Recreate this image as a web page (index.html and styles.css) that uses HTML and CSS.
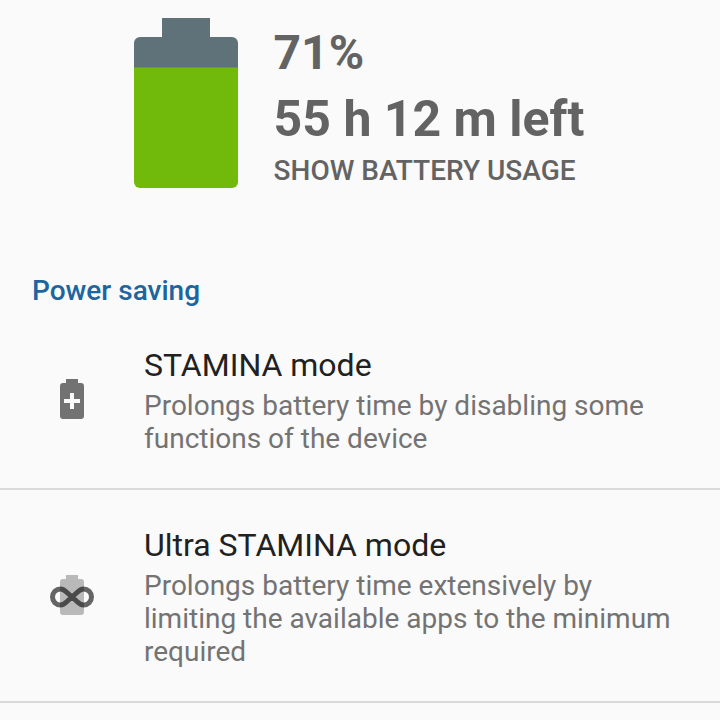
FILE: index.html
```html
<!DOCTYPE html>
<html lang="en">
<head>
  <meta charset="UTF-8" />
  <meta name="viewport" content="width=device-width, initial-scale=1.0"/>
  <title>Battery</title>
  <link rel="stylesheet" href="styles.css">
</head>
<body>

<header class="summary">
  <svg class="battery" viewBox="0 0 104 170" aria-hidden="true">
    <path fill="#607279" d="M28 0h48v19h22a6 6 0 0 1 6 6v26H0V25a6 6 0 0 1 6-6h22z"/>
    <path fill="#71b90b" d="M0 49.500h104v114.500a6 6 0 0 1-6 6H6a6 6 0 0 1-6-6z"/>
  </svg>
  <div class="summary-text">
    <p class="percent">71%</p>
    <p class="remaining">55 h 12 m left</p>
    <a class="usage-link" href="#usage">SHOW BATTERY USAGE</a>
  </div>
</header>

<main>
  <h2 class="section-title">Power saving</h2>

  <a class="mode" href="#stamina">
    <svg class="mode-icon" viewBox="0 0 48 48" aria-hidden="true">
      <path fill="#727272" d="M18 4h12v4h3a3 3 0 0 1 3 3v30a3 3 0 0 1-3 3H15a3 3 0 0 1-3-3V11a3 3 0 0 1 3-3h3z"/>
      <path fill="#fafafa" d="M22 18h4v6h6v4h-6v6h-4v-6h-6v-4h6z"/>
    </svg>
    <div class="mode-text">
      <h3>STAMINA mode</h3>
      <p>Prolongs battery time by disabling some functions of the device</p>
    </div>
  </a>

  <a class="mode" href="#ultra-stamina">
    <svg class="mode-icon" viewBox="0 0 48 48" aria-hidden="true">
      <path fill="#b9b9b9" d="M18 4h12v4h3a3 3 0 0 1 3 3v30a3 3 0 0 1-3 3H15a3 3 0 0 1-3-3V11a3 3 0 0 1 3-3h3z"/>
      <path fill="none" stroke="#000" stroke-opacity="0.6" stroke-width="5" d="M24 26L19 21.500C17 19.500 15 18 12.500 18a8 8 0 0 0 0 16C15 34 17 32.500 19 30.500L29 21.500C31 19.500 33 18 35.500 18a8 8 0 0 1 0 16C33 34 31 32.500 29 30.500z"/>
    </svg>
    <div class="mode-text">
      <h3>Ultra STAMINA mode</h3>
      <p>Prolongs battery time extensively by limiting the available apps to the minimum required</p>
    </div>
  </a>
</main>

</body>
</html>
```

FILE: styles.css
```css
body {
  font-family: Roboto, "Liberation Sans", sans-serif;
  margin: 0;
  background: #fafafa;
  color: #212121;
}

h2, h3, p {
  margin: 0;
}

a {
  color: inherit;
  text-decoration: none;
}

.summary {
  display: flex;
  justify-content: center;
  align-items: flex-start;
  gap: 36px;
  padding: 18px 0 86px;
}

.battery {
  width: 104px;
  height: 170px;
}

.summary-text {
  padding: 4px 2px 0 0;
  color: #636363;
  font-weight: bold;
}

.percent {
  font-size: 48px;
  line-height: 62px;
}

.remaining {
  font-size: 50px;
  line-height: 70px;
}

.usage-link {
  display: block;
  font-size: 28px;
  line-height: 33px;
  font-weight: 500;
}

.section-title {
  padding: 0 32px 3px;
  color: #1c659f;
  font-size: 28px;
  line-height: 33px;
  font-weight: 500;
}

.mode {
  display: flex;
  align-items: center;
  gap: 48px;
  padding: 0 32px 0 48px;
  border-bottom: 2px solid #dadada;
}

.mode-icon {
  flex: none;
  width: 48px;
  height: 48px;
  margin-bottom: 1px;
}

.mode-text {
  padding: 36px 0 33px;
}

.mode h3 {
  margin-bottom: 5px;
  font-size: 32px;
  line-height: 38px;
  font-weight: normal;
}

.mode p {
  color: #737373;
  font-size: 28px;
  line-height: 33px;
}
```
